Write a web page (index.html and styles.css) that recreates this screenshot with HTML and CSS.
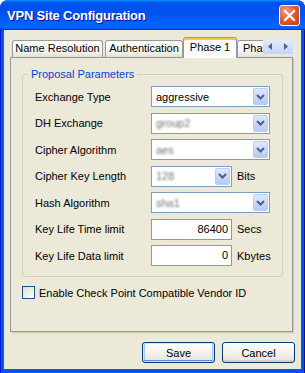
FILE: index.html
```html
<!DOCTYPE html>
<html lang="en">
  <head>
    <meta charset="UTF-8" />
    <meta name="viewport" content="width=device-width, initial-scale=1.0" />
    <title>VPN Site Configuration</title>
    <link rel="stylesheet" href="styles.css">
  </head>
  <body>
    <div class="window">
      <div class="titlebar">
        <span class="title">VPN Site Configuration</span>
        <span class="close">
          <svg width="13" height="13" viewBox="0 0 13 13"><path d="M2 2l9 9M11 2l-9 9" stroke="#fff" stroke-width="2.2" stroke-linecap="square"/></svg>
        </span>
      </div>

      <div class="client">
        <div class="tabs">
          <div class="tab t1">Name Resolution</div>
          <div class="tab t2">Authentication</div>
          <div class="tab t3 active">Phase 1</div>
          <div class="tab t4">Phase 2</div>
          <div class="tab-scroll">
            <span class="arrow"><svg width="5" height="7" viewBox="0 0 5 7"><path d="M4 0v7L0 3.5z" fill="#4D6185"/></svg></span>
            <span class="arrow"><svg width="5" height="7" viewBox="0 0 5 7"><path d="M1 0v7l4-3.5z" fill="#4D6185"/></svg></span>
          </div>
        </div>

        <div class="panel">
          <fieldset class="group">
            <legend>Proposal Parameters</legend>
            <div class="row">
              <span class="label">Exchange Type</span>
              <div class="combo"><span class="value">aggressive</span><span class="drop"><svg width="9" height="6" viewBox="0 0 9 6"><path d="M1 1l3.5 3.5L8 1" fill="none" stroke="#4D6185" stroke-width="2"/></svg></span></div>
            </div>
            <div class="row">
              <span class="label">DH Exchange</span>
              <div class="combo"><span class="value blur">group2</span><span class="drop"><svg width="9" height="6" viewBox="0 0 9 6"><path d="M1 1l3.5 3.5L8 1" fill="none" stroke="#4D6185" stroke-width="2"/></svg></span></div>
            </div>
            <div class="row">
              <span class="label">Cipher Algorithm</span>
              <div class="combo"><span class="value blur">aes</span><span class="drop"><svg width="9" height="6" viewBox="0 0 9 6"><path d="M1 1l3.5 3.5L8 1" fill="none" stroke="#4D6185" stroke-width="2"/></svg></span></div>
            </div>
            <div class="row">
              <span class="label">Cipher Key Length</span>
              <div class="combo short"><span class="value blur">128</span><span class="drop"><svg width="9" height="6" viewBox="0 0 9 6"><path d="M1 1l3.5 3.5L8 1" fill="none" stroke="#4D6185" stroke-width="2"/></svg></span></div>
              <span class="unit">Bits</span>
            </div>
            <div class="row">
              <span class="label">Hash Algorithm</span>
              <div class="combo"><span class="value blur">sha1</span><span class="drop"><svg width="9" height="6" viewBox="0 0 9 6"><path d="M1 1l3.5 3.5L8 1" fill="none" stroke="#4D6185" stroke-width="2"/></svg></span></div>
            </div>
            <div class="row">
              <span class="label">Key Life Time limit</span>
              <div class="field">86400</div>
              <span class="unit">Secs</span>
            </div>
            <div class="row">
              <span class="label">Key Life Data limit</span>
              <div class="field">0</div>
              <span class="unit">Kbytes</span>
            </div>
          </fieldset>

          <label class="check"><span class="box"></span>Enable Check Point Compatible Vendor ID</label>
        </div>

        <div class="buttons">
          <button class="btn default">Save</button>
          <button class="btn">Cancel</button>
        </div>
      </div>
    </div>
  </body>
</html>
```

FILE: styles.css
```css
body {
  margin: 0;
  font-family: "Liberation Sans", Arial, sans-serif;
  font-size: 11px;
  color: #000;
}
.window {
  width: 305px;
  height: 373px;
  display: flex;
  flex-direction: column;
  border-radius: 8px 8px 0 0;
  overflow: hidden;
  background: linear-gradient(to right, #0019cf 0 1px, #0055ea 1px 304px, #00138c 304px);
}
.titlebar {
  height: 30px;
  flex: none;
  display: flex;
  align-items: center;
  padding: 0 5px 0 7px;
  background: linear-gradient(180deg, #0997ff, #0053ee 8%, #0050ee 40%, #06f 88%, #06f 93%, #005bff 95%, #003dd7 96%, #003dd7);
}
.title {
  flex: 1;
  color: #fff;
  font-weight: bold;
  font-size: 13px;
  letter-spacing: -0.2px;
  text-shadow: 1px 1px #0f1089;
}
.close {
  width: 19px;
  height: 19px;
  display: flex;
  align-items: center;
  justify-content: center;
  border: 1px solid #fff;
  border-radius: 3px;
  background: radial-gradient(circle at 30% 25%, #f09a7f, #d9572f 55%, #c03a14);
}

.client {
  flex: 1;
  margin: 0 4px 4px;
  padding: 7px 8px 0 6px;
  background: #ece9d8;
  display: flex;
  flex-direction: column;
}

.tabs {
  height: 21px;
  width: 283px;
  display: flex;
  align-items: flex-end;
  overflow: hidden;
  position: relative;
}
.tab {
  flex: none;
  box-sizing: border-box;
  height: 17px;
  margin-bottom: 1px;
  border: 1px solid #919b9c;
  border-bottom: none;
  border-radius: 3px 3px 0 0;
  background: linear-gradient(#fff, #f3f3ef 70%, #e2dfd4);
  text-align: center;
  line-height: 15px;
  white-space: nowrap;
}
.t1 { margin-left: 2px; width: 91px; }
.t2 { margin-left: 2px; width: 78px; }
.t3 { width: 54px; }
.t4 { width: 62px; text-align: left; padding-left: 5px; }
.tab.active {
  height: 21px;
  margin-bottom: 0;
  position: relative;
  z-index: 1;
  background: #fcfcfe;
  border-top: 1px solid #e68b2c;
  box-shadow: inset 0 2px #ffc73c;
  line-height: 18px;
}
.tab-scroll {
  position: absolute;
  right: 0;
  top: 2px;
  height: 15px;
  display: flex;
}
.arrow {
  width: 15px;
  height: 15px;
  display: flex;
  align-items: center;
  justify-content: center;
  background: linear-gradient(#e3ebfd, #c4d3f8);
}

.panel {
  margin-top: -1px;
  height: 275px;
  box-sizing: border-box;
  border: 1px solid #919b9c;
  box-shadow: 1px 1px 0 #d0cdbe, 2px 2px 0 #e2dfcf;
  display: flex;
  flex-direction: column;
}
.group {
  margin: 9px 9px 0 11px;
  padding: 4px 0 10px 12px;
  border: 1px solid #d0d0bf;
  border-radius: 3px;
  display: flex;
  flex-direction: column;
  gap: 5.5px;
}
.group legend {
  margin-left: -7px;
  padding: 0 3px;
  line-height: 15px;
  color: #0046d5;
}
.row {
  height: 21px;
  display: flex;
  align-items: center;
}
.label {
  width: 116px;
  flex: none;
}
.combo {
  box-sizing: border-box;
  width: 119px;
  height: 21px;
  border: 1px solid #7f9db9;
  background: #fff;
  display: flex;
  align-items: center;
  padding: 1px;
}
.combo.short {
  width: 81px;
}
.value {
  flex: 1;
  padding-left: 3px;
}
.blur {
  color: #707070;
  filter: blur(1px);
}
.drop {
  box-sizing: border-box;
  width: 15px;
  height: 17px;
  display: flex;
  align-items: center;
  justify-content: center;
  border: 1px solid #bbcdf5;
  border-radius: 2px;
  background: linear-gradient(#dde7fd, #b7caf5);
}
.field {
  box-sizing: border-box;
  width: 81px;
  height: 21px;
  border: 1px solid #7f9db9;
  background: #fff;
  text-align: right;
  padding-right: 3px;
  line-height: 19px;
}
.unit {
  margin-left: 5px;
}

.check {
  margin: 9px 0 0 11px;
  display: flex;
  align-items: center;
  gap: 4px;
}
.box {
  box-sizing: border-box;
  width: 13px;
  height: 13px;
  border: 1px solid #1c5180;
  background: linear-gradient(135deg, #dcdcd7, #fff);
}

.buttons {
  margin: 10px -2px 0 0;
  display: flex;
  justify-content: flex-end;
  gap: 7px;
}
.btn {
  width: 73px;
  height: 21px;
  padding: 0;
  font: inherit;
  color: #000;
  border: 1px solid #003c74;
  border-radius: 3px;
  background: linear-gradient(#fff, #f1f0ea 60%, #e4e2d7);
  box-shadow: inset 0 -2px #d6d0c5;
}
.btn.default {
  box-shadow: inset 0 0 0 1px #cee7ff, inset 0 -2px #6982ee, inset 2px 0 #a9c6f4, inset -2px 0 #a9c6f4;
}
```
